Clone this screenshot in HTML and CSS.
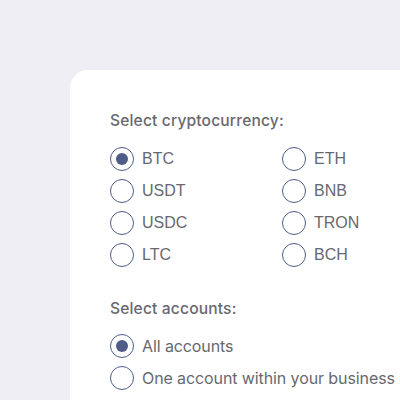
FILE: index.html
```html
<!DOCTYPE html>
<html>
<head>
<meta charset="utf-8">
<link rel="stylesheet" href="styles.css">
</head>
<body>
<div class="card">
  <div class="title">Select cryptocurrency:</div>
  <div class="grid">
    <label class="opt"><span class="radio on"></span><span class="code">BTC</span></label>
    <label class="opt"><span class="radio"></span><span class="code">ETH</span></label>
    <label class="opt"><span class="radio"></span><span class="code">USDT</span></label>
    <label class="opt"><span class="radio"></span><span class="code">BNB</span></label>
    <label class="opt"><span class="radio"></span><span class="code">USDC</span></label>
    <label class="opt"><span class="radio"></span><span class="code">TRON</span></label>
    <label class="opt"><span class="radio"></span><span class="code">LTC</span></label>
    <label class="opt"><span class="radio"></span><span class="code">BCH</span></label>
  </div>
  <div class="title second">Select accounts:</div>
  <div class="list">
    <label class="opt"><span class="radio on"></span><span class="acc">All accounts</span></label>
    <label class="opt"><span class="radio"></span><span class="acc">One account within your business</span></label>
  </div>
</div>
</body>
</html>
```

FILE: styles.css
```css
html, body {
  margin: 0;
  padding: 0;
  background: #eeeef4;
  overflow: hidden;
}
body {
  width: 400px;
  height: 400px;
}
.card {
  margin: 70px 0 0 70px;
  background: #ffffff;
  border-radius: 18px 0 0 0;
  padding: 41px 0 0 40px;
  height: 330px;
  box-sizing: border-box;
}
.title {
  font-family: Inter, "Open Sans", sans-serif;
  font-size: 15.6px;
  font-weight: 500;
  line-height: 20px;
  color: #68686f;
  letter-spacing: 0.15px;
}
.title.second {
  margin-top: 28px;
}
.grid {
  margin-top: 12px;
  display: grid;
  grid-template-columns: 172px 120px;
}
.list {
  margin-top: 11px;
  display: flex;
  flex-direction: column;
}
.opt {
  display: flex;
  align-items: center;
  height: 32px;
  gap: 8px;
  white-space: nowrap;
}
.radio {
  width: 24px;
  height: 24px;
  box-sizing: border-box;
  border: 1.5px solid #4f5c88;
  border-radius: 50%;
  display: flex;
  align-items: center;
  justify-content: center;
  flex: none;
}
.radio.on::after {
  content: "";
  width: 12px;
  height: 12px;
  border-radius: 50%;
  background: #4f5c88;
}
.code {
  font-family: "Liberation Sans", Arial, sans-serif;
  font-size: 16px;
  color: #68686f;
}
.acc {
  font-family: Inter, "Open Sans", sans-serif;
  font-size: 16px;
  color: #68686f;
  letter-spacing: -0.1px;
}
```
